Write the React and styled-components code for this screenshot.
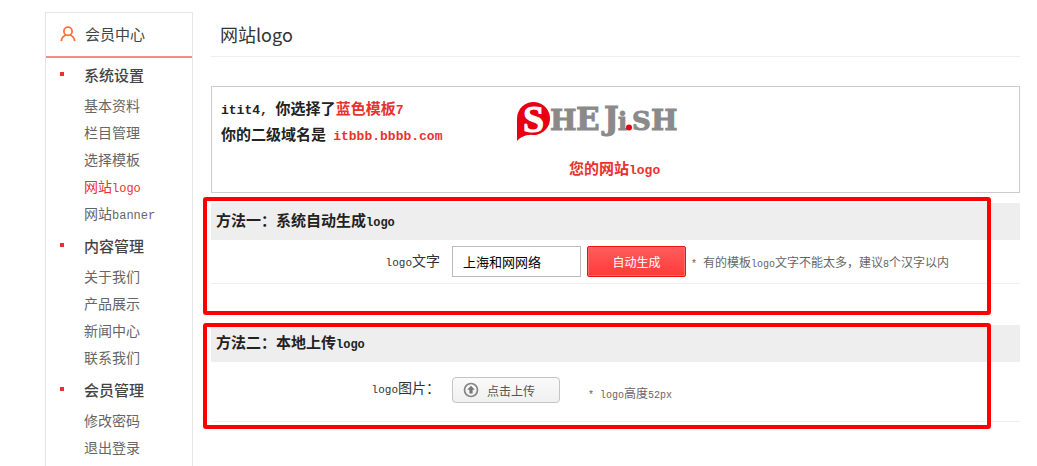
import React from 'react';
import styled, { createGlobalStyle } from 'styled-components';

const GlobalStyle = createGlobalStyle`
	* {
		box-sizing: border-box;
	}
	body {
		margin: 0;
		background: #fff;
		color: #333;
		font-family: 'Noto Sans CJK SC', sans-serif;
		font-size: 14px;
	}
	ul {
		list-style: none;
		margin: 0;
		padding: 0;
	}
	h1, h2, p {
		margin: 0;
	}
`;

const menu = [
	{
		title : '系统设置',
		items : [
			{ text: '基本资料' },
			{ text: '栏目管理' },
			{ text: '选择模板' },
			{ text: '网站', latin: 'logo', active: true },
			{ text: '网站', latin: 'banner' }
		]
	},
	{
		title : '内容管理',
		items : [ { text: '关于我们' }, { text: '产品展示' }, { text: '新闻中心' }, { text: '联系我们' } ]
	},
	{
		title : '会员管理',
		items : [ { text: '修改密码' }, { text: '退出登录' } ]
	}
];

const UserIcon = () => (
	<svg width="16" height="16" viewBox="0 0 16 16" fill="none" stroke="#ff7038" strokeWidth="1.8">
		<circle cx="8" cy="5.3" r="4.1" />
		<path d="M1.300 15.200C1.600 12 3.500 9.800 6.100 9M14.700 15.200C14.400 12 12.500 9.800 9.900 9" />
	</svg>
);

const UploadIcon = () => (
	<svg width="16" height="16" viewBox="0 0 16 16">
		<circle cx="8" cy="8" r="6.5" fill="none" stroke="#858585" strokeWidth="1.7" />
		<path d="M8 3.8l3.8 4H9.6v3.6H6.4V7.8H4.2z" fill="#777" />
	</svg>
);

const SiteLogo = () => (
	<svg width="164" height="48" viewBox="0 -6 164 48" role="img" aria-label="SHEJi.SH">
		<path d="M1 40V17.500A16.500 16.500 0 1 1 15 33.800C9 34 5 36 1 40z" fill="#e60012" />
		<LogoText $color="#fff" x="7" y="31" $size={38} $serif="Liberation Serif">
			S
		</LogoText>
		<LogoText x="34" y="29" $size={28}>H</LogoText>
		<LogoText x="60" y="29" $size={31}>E</LogoText>
		<LogoText x="88" y="28" $size={31}>J</LogoText>
		<LogoText x="102" y="29" $size={24}>i</LogoText>
		<circle cx="113" cy="26.500" r="3" fill="#e60012" />
		<LogoText x="116" y="29" $size={26}>S</LogoText>
		<LogoText x="135" y="29" $size={28}>H</LogoText>
	</svg>
);

const App = () => {
	return (
		<Page>
			<GlobalStyle />
			<SideBar>
				<SideTitle>
					<UserIcon />
					会员中心
				</SideTitle>
				{menu.map((group) => (
					<MenuGroup key={group.title}>
						<MenuTitle>{group.title}</MenuTitle>
						<ul>
							{group.items.map((item) => (
								<MenuItem key={item.text + (item.latin || '')}>
									<MenuLink href="#" $active={item.active}>
										{item.text}
										{item.latin && <Latin $size={12}>{item.latin}</Latin>}
									</MenuLink>
								</MenuItem>
							))}
						</ul>
					</MenuGroup>
				))}
			</SideBar>
			<Main>
				<PageTitle>网站logo</PageTitle>
				<InfoBox>
					<InfoText>
						<p>
							<Latin $size={13}>itit4, </Latin>
							你选择了<Red>
								蓝色模板<Latin $size={13}>7</Latin>
							</Red>
						</p>
						<p>
							你的二级域名是<Latin $size={12}> </Latin>
							<Red>
								<Latin $size={13}>itbbb.bbbb.com</Latin>
							</Red>
						</p>
					</InfoText>
					<LogoBlock>
						<SiteLogo />
						<LogoCaption>
							您的网站<Latin $size={13}>logo</Latin>
						</LogoCaption>
					</LogoBlock>
				</InfoBox>
				<Method $space={41}>
					<MethodTitle>
						方法一：系统自动生成<Latin $size={12}>logo</Latin>
					</MethodTitle>
					<FormRow>
						<Label htmlFor="logo-text">
							<Latin $size={11}>logo</Latin>文字
						</Label>
						<TextInput id="logo-text" type="text" defaultValue="上海和网网络" />
						<RedButton type="button">自动生成</RedButton>
						<Note>
							<Latin $size={10}>* </Latin>有的模板<Latin $size={10}>logo</Latin>文字不能太多，建议<Latin $size={10}>8</Latin>个汉字以内
						</Note>
					</FormRow>
					<Frame $top={6} $bottom={10} />
				</Method>
				<Method $space={43}>
					<MethodTitle>
						方法二：本地上传<Latin $size={12}>logo</Latin>
					</MethodTitle>
					<FormRow $tall>
						<Label as="span">
							<Latin $size={11}>logo</Latin>图片：
						</Label>
						<UploadButton type="button">
							<UploadIcon />
							点击上传
						</UploadButton>
						<Note $low>
							<Latin $size={10}>* logo</Latin>高度<Latin $size={10}>52px</Latin>
						</Note>
					</FormRow>
					<Frame $top={2} $bottom={36} />
				</Method>
			</Main>
		</Page>
	);
};

const Page = styled.div`
	display: flex;
	align-items: flex-start;
	gap: 18px;
	padding: 12px 17px 0 45px;
	height: 100vh;
	overflow: hidden;
`;
const SideBar = styled.nav`
	flex: 0 0 148px;
	min-height: 100vh;
	border: 1px solid #e6e6e6;
`;
const SideTitle = styled.div`
	display: flex;
	align-items: center;
	gap: 9px;
	height: 45px;
	padding: 0 0 2px 14px;
	border-bottom: 2px solid #f28c8c;
	color: #444;
	font-size: 15px;
`;
const MenuGroup = styled.div`
	padding-bottom: 2px;
`;
const MenuTitle = styled.h2`
	display: flex;
	align-items: center;
	gap: 20px;
	height: 34px;
	padding: 0 0 2px 14px;
	color: #444;
	font-size: 15px;
	font-weight: 500;
	&::before {
		content: '';
		width: 4px;
		height: 4px;
		background: #e8322f;
	}
`;
const MenuItem = styled.li`
	height: 27px;
	padding-left: 38px;
	line-height: 27px;
`;
const MenuLink = styled.a`
	color: ${(props) => (props.$active ? '#ee3030' : '#666')};
	text-decoration: none;
`;
const Latin = styled.span`
	font-family: 'Liberation Mono', monospace;
	font-size: ${(props) => props.$size}px;
	line-height: 1;
	white-space: pre;
`;
const Main = styled.main`
	flex: 1;
	min-width: 0;
`;
const PageTitle = styled.h1`
	height: 45px;
	padding-left: 9px;
	border-bottom: 1px solid #eee;
	font-size: 18px;
	font-weight: 400;
	line-height: 44px;
`;
const InfoBox = styled.section`
	display: flex;
	height: 107px;
	margin: 29px 0 10px;
	padding: 8px 9px;
	border: 1px solid #ccc;
`;
const InfoText = styled.div`
	flex: 0 0 295px;
	color: #222;
	font-size: 15px;
	font-weight: 700;
	line-height: 26px;
`;
const Red = styled.span`
	color: #e8322f;
`;
const LogoBlock = styled.div`
	display: flex;
	flex-direction: column;
`;
const LogoText = styled.text`
	fill: ${(props) => props.$color || '#8a8a8a'};
	stroke: ${(props) => props.$color || '#8a8a8a'};
	stroke-width: 1;
	font-family: '${(props) => props.$serif || 'DejaVu Serif'}', serif;
	font-size: ${(props) => props.$size}px;
	font-weight: 700;
`;
const LogoCaption = styled.p`
	padding: 13px 0 0 53px;
	color: #e8322f;
	font-size: 15px;
	font-weight: 700;
	line-height: 24px;
`;
const Method = styled.section`
	position: relative;
	padding-bottom: ${(props) => props.$space}px;
`;
const MethodTitle = styled.h2`
	height: 37px;
	padding-left: 5px;
	background: #eee;
	color: #222;
	font-size: 15px;
	font-weight: 700;
	line-height: 33px;
`;
const FormRow = styled.div`
	display: flex;
	align-items: ${(props) => (props.$tall ? 'stretch' : 'center')};
	padding: ${(props) => (props.$tall ? '15px 0 18px' : '6px 0')};
	border-bottom: 1px solid #eee;
`;
const Label = styled.label`
	flex: 0 0 229px;
	margin-right: 12px;
	padding-bottom: 4px;
	line-height: 20px;
	text-align: right;
`;
const TextInput = styled.input`
	width: 129px;
	height: 31px;
	margin-right: 6px;
	padding: 0 10px;
	border: 1px solid #bbb;
	color: #000;
	font-family: inherit;
	font-size: 13px;
`;
const RedButton = styled.button`
	width: 99px;
	height: 31px;
	margin-right: 5px;
	padding: 0;
	border: 1px solid #f01010;
	border-radius: 2px;
	background: linear-gradient(#ff5c5c, #ff3a3a);
	box-shadow: inset 0 0 0 1px #ff6a6a;
	color: #fff;
	font-family: inherit;
	font-size: 12px;
`;
const UploadButton = styled.button`
	display: flex;
	align-items: center;
	gap: 8px;
	width: 108px;
	height: 26px;
	margin-right: 28px;
	padding: 0 10px;
	border: 1px solid #c4c4c4;
	border-radius: 4px;
	background: linear-gradient(#fafafa, #f0f0f0);
	color: #555;
	font-family: inherit;
	font-size: 12px;
`;
const Note = styled.span`
	align-self: ${(props) => (props.$low ? 'flex-end' : 'center')};
	color: #666;
	font-size: 12px;
	line-height: 20px;
`;
/* red highlight drawn over a method block */
const Frame = styled.div`
	position: absolute;
	top: -${(props) => props.$top}px;
	right: 29px;
	bottom: ${(props) => props.$bottom}px;
	left: -8px;
	border: 4px solid #f00;
	border-radius: 3px;
	pointer-events: none;
`;

export default App;
